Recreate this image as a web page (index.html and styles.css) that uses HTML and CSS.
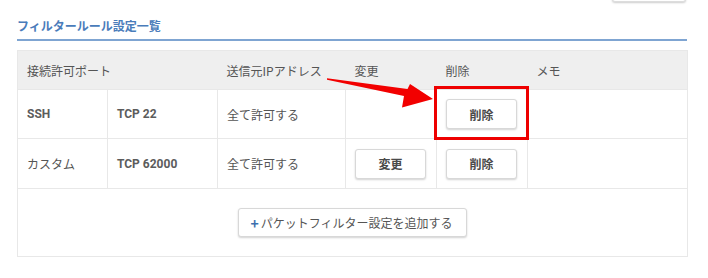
FILE: index.html
```html
<!DOCTYPE html>
<html lang="ja">
<head>
<meta charset="utf-8">
<link rel="stylesheet" href="styles.css">
</head>
<body>
<div class="page">
  <div class="top-btn"></div>
  <h2 class="title">フィルタールール設定一覧</h2>
  <div class="table-wrap">
    <table class="rules">
      <colgroup>
        <col class="c1"><col class="c2"><col class="c3"><col class="c4"><col class="c5"><col class="c6">
      </colgroup>
      <thead>
        <tr>
          <th colspan="2">接続許可ポート</th>
          <th>送信元IPアドレス</th>
          <th>変更</th>
          <th>削除</th>
          <th>メモ</th>
        </tr>
      </thead>
      <tbody>
        <tr>
          <td class="strong">SSH</td>
          <td class="strong">TCP 22</td>
          <td>全て許可する</td>
          <td></td>
          <td><span class="btn">削除</span></td>
          <td></td>
        </tr>
        <tr>
          <td>カスタム</td>
          <td class="strong">TCP 62000</td>
          <td>全て許可する</td>
          <td><span class="btn">変更</span></td>
          <td><span class="btn">削除</span></td>
          <td></td>
        </tr>
        <tr class="footer">
          <td colspan="6"><span class="add-btn"><span class="plus">+</span>パケットフィルター設定を追加する</span></td>
        </tr>
      </tbody>
    </table>
    <div class="highlight"></div>
    <svg class="arrow" width="140" height="45" viewBox="300 70 140 45">
      <polygon points="327,78.3 407.5,89 410,84 433,99 402,107.5 404,96 327,79.7" fill="#f20000"/>
    </svg>
  </div>
</div>
</body>
</html>
```

FILE: styles.css
```css
html, body {
  margin: 0;
  padding: 0;
  background: #ffffff;
}
body {
  font-family: Roboto, "Noto Sans CJK JP", sans-serif;
  font-size: 12px;
  color: #555555;
}
.page {
  position: relative;
  padding: 17px 21px 0 17px;
}
.top-btn {
  position: absolute;
  top: -30px;
  left: 612px;
  width: 72px;
  height: 30px;
  border: 1px solid #dddddd;
  border-radius: 3px;
  box-shadow: 0 1px 2px rgba(0,0,0,0.2);
  background: #fff;
}
.title {
  margin: 0;
  font-family: "Noto Sans CJK JP", sans-serif;
  font-size: 12px;
  font-weight: bold;
  line-height: 18px;
  color: #4a7cba;
  padding-bottom: 4px;
  border-bottom: 2px solid #7fa5d2;
}
.table-wrap {
  position: relative;
  margin-top: 9px;
}
.rules {
  width: 670px;
  border-collapse: collapse;
  table-layout: fixed;
  border: 1px solid #e8e8e8;
}
.c1 { width: 90px; }
.c2 { width: 110px; }
.c3 { width: 128px; }
.c4 { width: 91px; }
.c5 { width: 91px; }
.c6 { width: 160px; }
.rules th {
  background: #efefef;
  font-weight: normal;
  text-align: left;
  height: 38px;
  padding: 0 9px;
  color: #555;
  font-family: "Noto Sans CJK JP", sans-serif;
}
.rules td {
  border: 1px solid #e8e8e8;
  height: 48px;
  padding: 0 9px;
  color: #555;
  font-family: "Noto Sans CJK JP", sans-serif;
}
.rules td.strong {
  font-family: Roboto, "Noto Sans CJK JP", sans-serif;
  font-weight: bold;
  color: #5c5c5c;
}
.rules tbody tr:nth-child(2) td { height: 49px; }
.btn {
  display: inline-flex;
  align-items: center;
  justify-content: center;
  width: 69px;
  height: 28px;
  border: 1px solid #d8d8d8;
  border-radius: 3px;
  box-shadow: 0 1px 2px rgba(0,0,0,0.18);
  background: #fff;
  font-weight: bold;
  color: #4a4a4a;
}
.rules tr.footer td {
  height: 67px;
  text-align: center;
}
.add-btn {
  display: inline-flex;
  align-items: center;
  height: 27px;
  padding: 0 13px 0 11px;
  border: 1px solid #d8d8d8;
  border-radius: 3px;
  box-shadow: 0 1px 2px rgba(0,0,0,0.18);
  background: #fff;
  color: #555;
  font-size: 12px;
}
.plus {
  color: #3d6fae;
  font-weight: bold;
  font-size: 14px;
  margin-right: 2px;
}
.highlight {
  position: absolute;
  left: 417px;
  top: 36px;
  width: 89px;
  height: 48px;
  border: 3px solid #ee0000;
}
.arrow {
  position: absolute;
  left: 283px;
  top: 20px;
}
```
